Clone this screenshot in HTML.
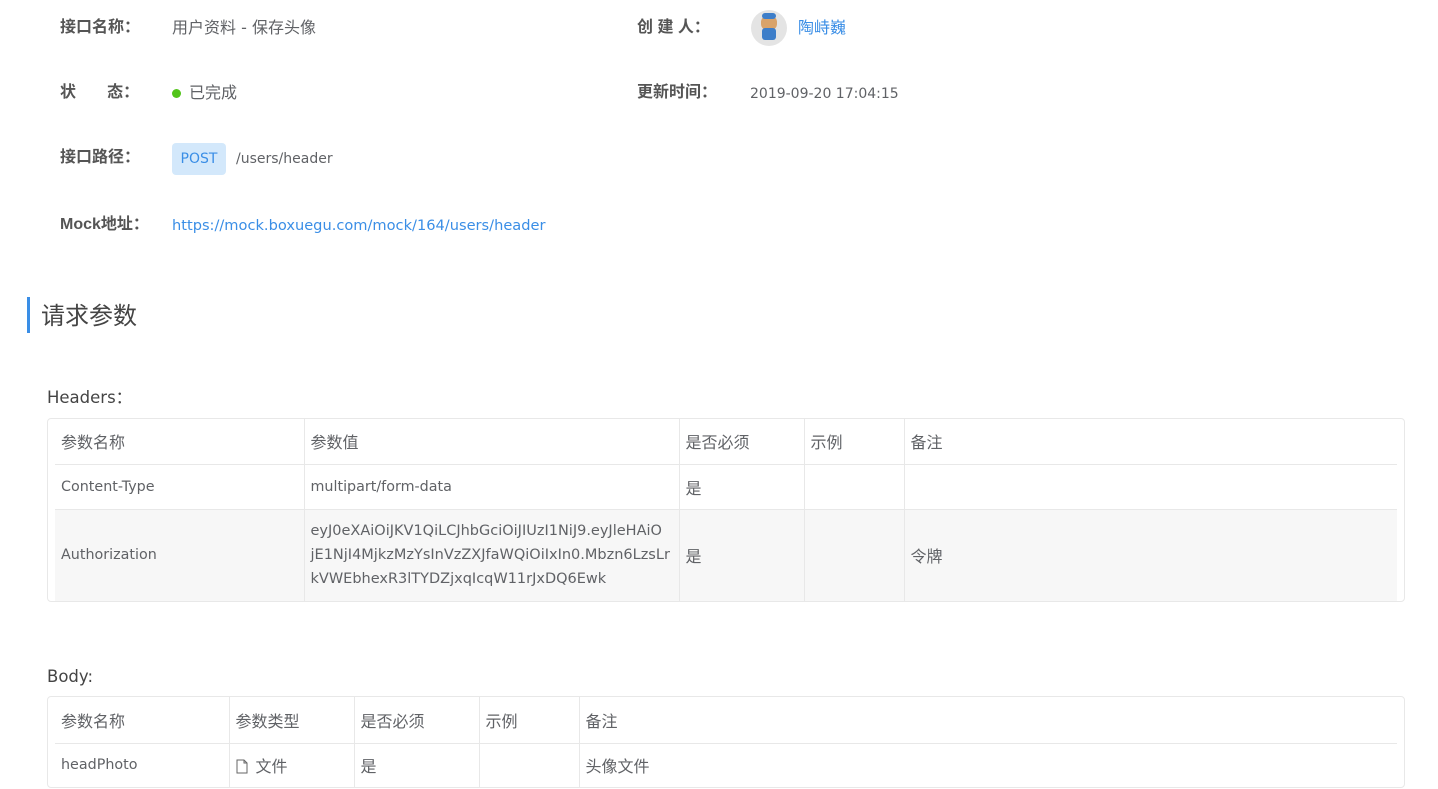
<!DOCTYPE html>
<html><head><meta charset="utf-8"><style>
*{margin:0;padding:0;box-sizing:border-box}
body{width:1438px;height:789px;background:#fff;font-family:"DejaVu Sans","Noto Sans CJK SC",sans-serif;font-size:14px;color:#606266;position:relative;overflow:hidden}
.a{position:absolute;white-space:nowrap;line-height:20px}
.c{font-size:16px}
.lb{font-weight:bold;color:#555;font-size:16px;font-family:"Liberation Sans","Noto Sans CJK SC",sans-serif}
.blue{color:#3a8ee6}
.box{position:absolute;left:47px;width:1358px;border:1px solid #e8e8e8;border-radius:4px;padding:0 7px}
table{border-collapse:collapse;width:100%;table-layout:fixed}
td{padding:0 6px;border-left:1px solid #e8e8e8;vertical-align:middle;color:#606266;font-size:14.3px;white-space:nowrap;overflow:hidden}
td:first-child{border-left:none}
tr+tr td{border-top:1px solid #e8e8e8}
.g td{background:#f7f7f7}
td.c{font-size:16px}
</style></head><body>
<div class="a lb" style="left:60px;top:18px">接口名称：</div>
<div class="a c" style="left:172px;top:18px">用户资料 - 保存头像</div>
<div class="a lb" style="left:637px;top:18px">创&nbsp;建&nbsp;人：</div>
<div style="position:absolute;left:751px;top:10px;width:36px;height:36px;border-radius:50%;background:#e4e4e4"><div style="position:absolute;left:10px;top:6px;width:16px;height:14px;border-radius:6px;background:#d9a36a"></div><div style="position:absolute;left:11px;top:18px;width:14px;height:12px;border-radius:3px;background:#3d7ec9"></div><div style="position:absolute;left:11px;top:3px;width:14px;height:6px;border-radius:4px;background:#3d7ec9"></div></div>
<div class="a blue c" style="left:798px;top:18px">陶峙巍</div>
<div class="a lb" style="left:60px;top:83px">状&nbsp;&nbsp;&nbsp;&nbsp;&nbsp;&nbsp;&nbsp;态：</div>
<div style="position:absolute;left:172px;top:89px;width:9px;height:9px;border-radius:50%;background:#52c41a"></div>
<div class="a c" style="left:189px;top:83px">已完成</div>
<div class="a lb" style="left:637px;top:83px">更新时间：</div>
<div class="a" style="left:750px;top:84px">2019-09-20 17:04:15</div>
<div class="a lb" style="left:60px;top:148px">接口路径：</div>
<div style="position:absolute;left:172px;top:143px;width:54px;height:32px;border-radius:4px;background:#d3e8fb;color:#3a8ee6;text-align:center;line-height:32px;font-size:14px">POST</div>
<div class="a" style="left:236px;top:149px">/users/header</div>
<div class="a lb" style="left:60px;top:215px">Mock地址：</div>
<div class="a blue" style="left:172px;top:216px;font-size:14.6px">https://mock.boxuegu.com/mock/164/users/header</div>
<div style="position:absolute;left:27px;top:297px;width:3px;height:36px;background:#3a8ee6"></div>
<div class="a" style="left:41px;top:301px;font-size:24px;line-height:30px;color:#444">请求参数</div>
<div class="a" style="left:47px;top:388px;font-size:16.5px;color:#444">Headers：</div>
<div class="box" style="top:418px;height:184px">
<table>
<colgroup><col style="width:249px"><col style="width:375px"><col style="width:125px"><col style="width:100px"><col></colgroup>
<tr style="height:45px"><td class="c">参数名称</td><td class="c">参数值</td><td class="c">是否必须</td><td class="c">示例</td><td class="c">备注</td></tr>
<tr style="height:45px"><td>Content-Type</td><td>multipart/form-data</td><td class="c">是</td><td></td><td></td></tr>
<tr class="g" style="height:92px"><td>Authorization</td><td style="line-height:24px;font-size:14.5px">eyJ0eXAiOiJKV1QiLCJhbGciOiJIUzI1NiJ9.eyJleHAiO<br>jE1NjI4MjkzMzYsInVzZXJfaWQiOiIxIn0.Mbzn6LzsLr<br>kVWEbhexR3lTYDZjxqIcqW11rJxDQ6Ewk</td><td class="c">是</td><td></td><td class="c">令牌</td></tr>
</table></div>
<div class="a" style="left:47px;top:667px;font-size:16.5px;color:#444">Body:</div>
<div class="box" style="top:696px;height:92px">
<table>
<colgroup><col style="width:174px"><col style="width:125px"><col style="width:125px"><col style="width:100px"><col></colgroup>
<tr style="height:46px"><td class="c">参数名称</td><td class="c">参数类型</td><td class="c">是否必须</td><td class="c">示例</td><td class="c">备注</td></tr>
<tr style="height:44px"><td>headPhoto</td><td class="c"><svg width="12" height="15" viewBox="0 0 12 15" style="vertical-align:-2px;margin-right:8px"><path d="M1 1h7l3 3v10H1z M8 1v3h3" fill="none" stroke="#666" stroke-width="1"/></svg>文件</td><td class="c">是</td><td></td><td class="c">头像文件</td></tr>
</table></div>
</body></html>
